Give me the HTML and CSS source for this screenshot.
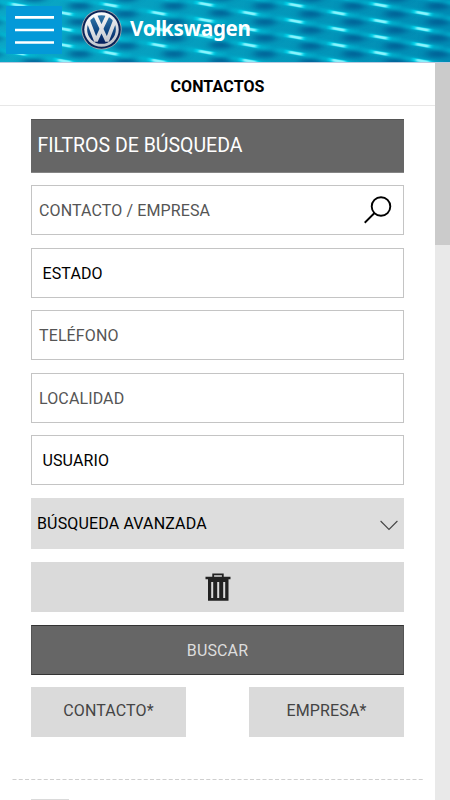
FILE: index.html
```html
<!DOCTYPE html>
<html lang="es">
<head>
<meta charset="utf-8">
<meta name="viewport" content="width=device-width, initial-scale=1">
<title>Contactos</title>
<link rel="stylesheet" href="styles.css">
</head>
<body>
<header class="topbar">
  <svg class="texture" viewBox="0 0 450 62" preserveAspectRatio="none" aria-hidden="true">
    <defs>
      <filter id="soft" x="-40%" y="-150%" width="180%" height="400%"><feGaussianBlur stdDeviation="4 2"/></filter>
      <filter id="band" filterUnits="userSpaceOnUse" x="-40" y="-15" width="80" height="30"><feGaussianBlur stdDeviation="4 1.6"/></filter>
      <filter id="fine" filterUnits="userSpaceOnUse" x="-20" y="-8" width="40" height="16"><feGaussianBlur stdDeviation="1.8 .7"/></filter>
      <linearGradient id="base"><stop offset="0" stop-color="#0ba8c6"/><stop offset=".5" stop-color="#049cbd"/><stop offset="1" stop-color="#028cb4"/></linearGradient>
      <g id="cell">
        <ellipse cx="16" cy="9" rx="12" ry="3.8" fill="#01568f" opacity=".8" filter="url(#soft)"/>
        <path d="M-20-3.6L20 3.6" stroke="#00bcd6" stroke-width="4" opacity=".85" filter="url(#band)"/>
        <path d="M-10-1.8L10 1.8" stroke="#00d6ec" stroke-width="3.6" opacity=".8" filter="url(#fine)"/>
        <path d="M-6-1L7 1.4" stroke="#9af7ff" stroke-width="2.6" opacity=".9" filter="url(#fine)"/>
      </g>
      <g id="column">
        <use href="#cell" y="-11"/><use href="#cell" y="5"/><use href="#cell" y="21"/><use href="#cell" y="37"/><use href="#cell" y="53"/>
      </g>
    </defs>
    <path fill="url(#base)" d="M0 0H450V62H0z"/>
    <use href="#column" x="-26" y="8"/><use href="#column" x="18"/><use href="#column" x="64" y="8"/>
    <use href="#column" x="110"/><use href="#column" x="158" y="8"/><use href="#column" x="205" y="-1"/>
    <use href="#column" x="249" y="8"/><use href="#column" x="295"/><use href="#column" x="338" y="8"/>
    <use href="#column" x="380"/><use href="#column" x="422" y="8"/><use href="#column" x="465"/>
  </svg>
  <button class="menu" aria-label="Menú"><svg viewBox="0 0 39 29"><path d="M0 1.4H39M0 14H39M0 26.5H39" stroke="#fff" stroke-width="2.7"/></svg></button>
  <svg class="logo" viewBox="0 0 40 40" aria-hidden="true">
    <defs>
      <linearGradient id="blue" x2="0" y2="1"><stop offset="0" stop-color="#3278aa"/><stop offset=".55" stop-color="#104783"/><stop offset="1" stop-color="#061f5c"/></linearGradient>
      <linearGradient id="chrome" gradientUnits="userSpaceOnUse" x1="12" y1="4" x2="22" y2="36"><stop offset="0" stop-color="#fff"/><stop offset="1" stop-color="#c0c3ca"/></linearGradient>
    </defs>
    <circle cx="20" cy="20" r="19.6" fill="#a8a9b0"/>
    <circle cx="20" cy="20" r="18.8" fill="#0b2458"/>
    <circle cx="20" cy="20" r="16.8" fill="url(#chrome)"/>
    <circle cx="20" cy="20" r="14" fill="url(#blue)"/>
    <g fill="none" stroke="url(#chrome)" stroke-width="3.7" stroke-linejoin="bevel">
      <path d="M13.8 6L20 19L26.2 6"/>
      <path d="M7.2 12L14.6 31.2L20 19.5L25.4 31.2L32.8 12"/>
    </g>
  </svg>
  <span class="brand">Volkswagen</span>
</header>
<div class="viewport">
  <main class="page">
    <h1 class="title">CONTACTOS</h1>
    <form class="filters">
      <h2 class="heading">FILTROS DE BÚSQUEDA</h2>
      <div class="field"><span>CONTACTO / EMPRESA</span>
        <svg class="search" viewBox="0 0 30 30"><g fill="none" stroke="#000" stroke-width="1.9"><circle cx="18" cy="11.5" r="9.3"/><path d="M11.5 18L1.7 27.7"/></g></svg>
      </div>
      <div class="field select half"><span>ESTADO</span></div>
      <div class="field"><span>TELÉFONO</span></div>
      <div class="field half"><span>LOCALIDAD</span></div>
      <div class="field select"><span>USUARIO</span></div>
      <div class="advanced"><span>BÚSQUEDA AVANZADA</span>
        <svg class="chevron" viewBox="0 0 18 11"><path d="M.6 1L9 9.5L17.4 1" fill="none" stroke="#444" stroke-width="1.1"/></svg>
      </div>
      <button type="button" class="clear" aria-label="Borrar">
        <svg class="trash" viewBox="0 0 26 28"><path fill="none" stroke="#222" stroke-width="1.8" d="M8.2 4V1.3H17.8V4"/><path fill="#222" d="M.5 3.7H25.5V6.2H.5zM3 6H23.5V27.7H3z"/><path stroke="#dadada" stroke-width="2" d="M7.2 9V25M13.2 9V25M19.2 9V25"/></svg>
      </button>
      <button type="button" class="submit">BUSCAR</button>
      <div class="actions"><button type="button">CONTACTO*</button><button type="button">EMPRESA*</button></div>
    </form>
    <svg class="divider" viewBox="0 0 412 1"><path d="M.5.5H411" stroke="#cfcfcf" stroke-dasharray="4 2.25"/></svg>
    <div class="result"></div>
  </main>
  <div class="scrollbar"><div class="thumb"></div></div>
</div>
</body>
</html>
```
FILE: styles.css
```css
* { box-sizing: border-box; }
body {
  margin: 0;
  height: 800px;
  overflow: hidden;
  background: #fff;
  font: 16px Roboto, sans-serif;
  letter-spacing: .12px;
  color: #000;
}
button { border: 0; padding: 0; font: inherit; letter-spacing: inherit; }
svg { display: block; }
.topbar {
  position: relative;
  display: flex;
  align-items: flex-start;
  height: 63px;
  padding: 6px;
  overflow: hidden;
  border-bottom: 1px solid #bac9df;
}
.texture { position: absolute; left: 0; top: 0; width: 450px; height: 62px; }
.menu {
  position: relative;
  display: flex;
  width: 56px;
  height: 48px;
  padding: 10px 8px 0 9px;
  background: #0499d8;
}
.menu svg { width: 39px; height: 29px; }
.logo { position: relative; width: 41px; height: 41px; margin: 3px 0 0 19px; }
.brand {
  position: relative;
  margin: 8px 0 0 8px;
  color: #fff;
  font: 700 20.5px/28px "Noto Sans", sans-serif;
  letter-spacing: -.25px;
}
.viewport { display: flex; height: 737px; }
.page { width: 435px; flex: none; overflow: hidden; }
.title {
  height: 43px;
  margin: 0;
  border-bottom: 1px solid #e7e7e7;
  font-size: 16px;
  font-weight: 700;
  line-height: 48px;
  text-align: center;
}
.filters { width: 373px; margin: 13px 0 0 31px; }
.heading {
  height: 54px;
  margin: 0 0 12px;
  padding-left: 6.5px;
  background: #666;
  border-top: 1px solid #555;
  border-bottom: 1px solid #858585;
  color: #fff;
  font-size: 19.5px;
  font-weight: 400;
  letter-spacing: 0;
  line-height: 51px;
}
.field {
  display: flex;
  justify-content: space-between;
  height: 50px;
  margin-bottom: 13px;
  padding: 0 10px 0 7px;
  border: 1px solid #c4c4c4;
  color: #555;
  line-height: 50px;
}
.half { margin-bottom: 12px; }
.field.select { padding-left: 10.5px; color: #000; }
.search { width: 30px; height: 30px; margin-top: 9px; }
.advanced {
  display: flex;
  justify-content: space-between;
  height: 51px;
  margin-bottom: 13px;
  padding: 0 6px;
  background: #ddd;
  letter-spacing: .15px;
  line-height: 51px;
}
.chevron { width: 18px; height: 11px; margin-top: 22px; }
.clear {
  display: flex;
  justify-content: center;
  width: 100%;
  height: 50px;
  margin-bottom: 13px;
  padding-top: 11px;
  background: #dadada;
}
.trash { width: 26px; height: 28px; }
.submit {
  display: block;
  width: 100%;
  height: 50px;
  background: #666;
  border: 1px solid #555;
  border-top-color: #333;
  border-bottom-color: #333;
  color: #ddd;
}
.actions { display: flex; justify-content: space-between; margin-top: 12px; }
.actions button {
  width: 155px;
  height: 50px;
  padding-bottom: 3px;
  background: #dadada;
  color: #444;
}
.divider { width: 412px; height: 1px; margin: 42px 0 0 12px; }
.result { width: 38px; height: 30px; margin: 19px 0 0 31px; background: #dadada; }
.scrollbar { width: 15px; background: #e9e9e9; }
.thumb { height: 182px; background: #cbcbcb; }
```
